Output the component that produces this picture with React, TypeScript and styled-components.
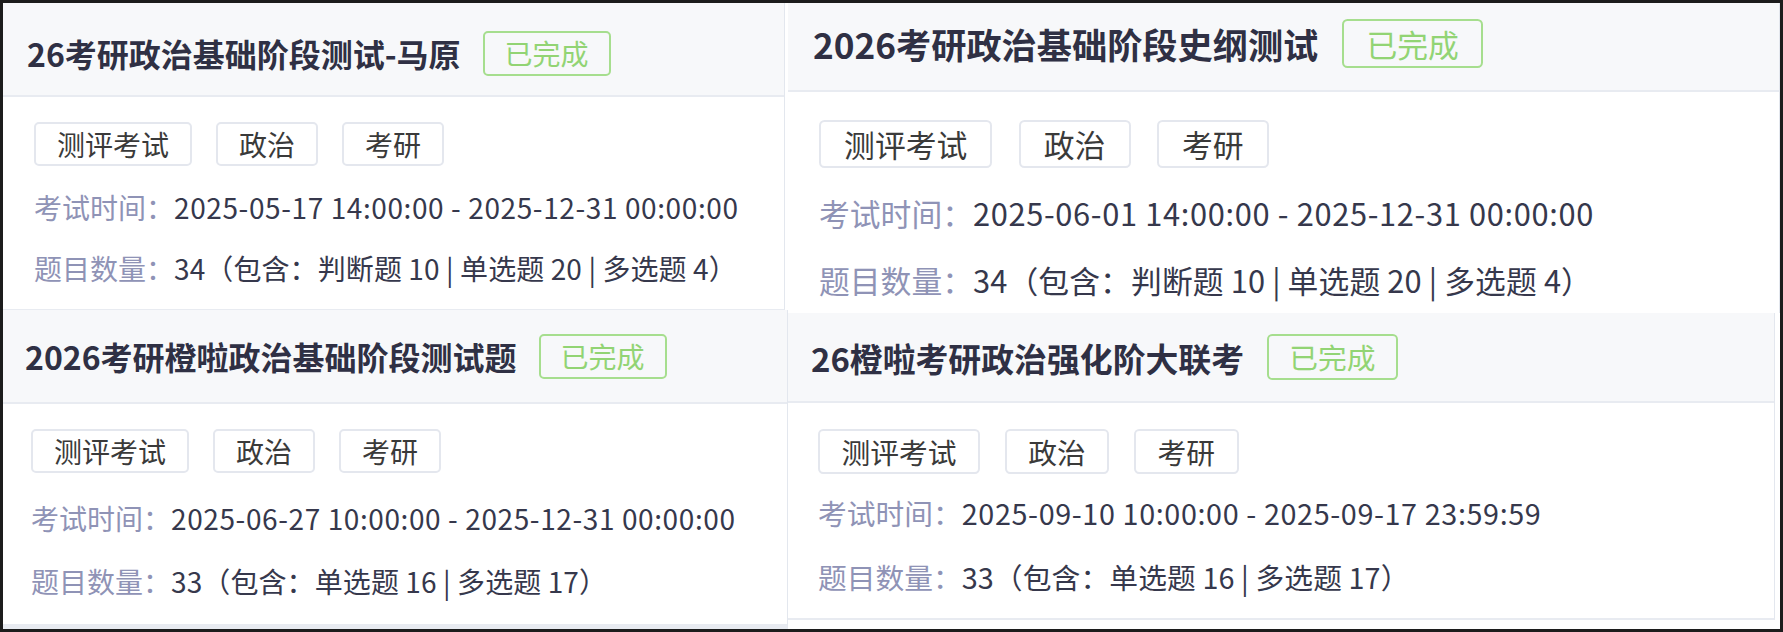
import React from "react";
import styled, { createGlobalStyle } from "styled-components";

const GlobalStyle = createGlobalStyle`
  html, body {
    margin: 0;
    padding: 0;
    background: #ffffff;
  }
  body {
    font-family: "Noto Sans CJK SC", "Noto Sans", sans-serif;
  }
`;

interface ExamCard {
  title: string;
  time: string;
  count: string;
  // the four cards are pasted from separate captures, so each keeps its own scale and offsets
  s: number;
  width?: number;
  height: number;
  headH: number;
  headPadT: number;
  headPadB: number;
  headPadX: number;
  padX: number;
  rowTop: [number, number];
  bottom: number;
}

const left: ExamCard[] = [
  {
    title: "26考研政治基础阶段测试-马原",
    time: "2025-05-17 14:00:00 - 2025-12-31 00:00:00",
    count: "34（包含：判断题 10 | 单选题 20 | 多选题 4）",
    s: 1,
    width: 782,
    height: 307,
    headH: 94,
    headPadT: 8,
    headPadB: 0,
    headPadX: 24,
    padX: 31,
    rowTop: [21, 21],
    bottom: 1,
  },
  {
    title: "2026考研橙啦政治基础阶段测试题",
    time: "2025-06-27 10:00:00 - 2025-12-31 00:00:00",
    count: "33（包含：单选题 16 | 多选题 17）",
    s: 1,
    width: 785,
    height: 319,
    headH: 94,
    headPadT: 0,
    headPadB: 0,
    headPadX: 22,
    padX: 28,
    rowTop: [25, 23],
    bottom: 5,
  },
];

const right: ExamCard[] = [
  {
    title: "2026考研政治基础阶段史纲测试",
    time: "2025-06-01 14:00:00 - 2025-12-31 00:00:00",
    count: "34（包含：判断题 10 | 单选题 20 | 多选题 4）",
    s: 1.1,
    height: 310,
    headH: 89,
    headPadT: 0,
    headPadB: 6,
    headPadX: 25,
    padX: 31,
    rowTop: [21, 21],
    bottom: 0,
  },
  {
    title: "26橙啦考研政治强化阶大联考",
    time: "2025-09-10 10:00:00 - 2025-09-17 23:59:59",
    count: "33（包含：单选题 16 | 多选题 17）",
    s: 1.027,
    width: 987,
    height: 307,
    headH: 90,
    headPadT: 0,
    headPadB: 0,
    headPadX: 23,
    padX: 30,
    rowTop: [18, 22],
    bottom: 2,
  },
];

const tags = ["测评考试", "政治", "考研"];

function Card({ data }: { data: ExamCard }) {
  return (
    <CardBox $w={data.width} $h={data.height} $bottom={data.bottom}>
      <Head $h={data.headH} $padT={data.headPadT} $padB={data.headPadB} $padX={data.headPadX}>
        <Title $s={data.s}>{data.title}</Title>
        <Badge $s={data.s}>已完成</Badge>
      </Head>
      <Body $s={data.s} $padX={data.padX}>
        <TagRow $s={data.s}>
          {tags.map((t) => (
            <Tag key={t} $s={data.s}>{t}</Tag>
          ))}
        </TagRow>
        <Info $s={data.s} $top={data.rowTop[0]}>
          <Label>考试时间：</Label>
          <Value $s={data.s} $spacing={0.6}>{data.time}</Value>
        </Info>
        <Info $s={data.s} $top={data.rowTop[1]}>
          <Label>题目数量：</Label>
          <Value $s={data.s} $spacing={0.1}>{data.count}</Value>
        </Info>
      </Body>
    </CardBox>
  );
}

export default function App() {
  return (
    <>
      <GlobalStyle />
      <Frame>
        <Column $w={785}>
          {left.map((c) => (
            <Card key={c.title} data={c} />
          ))}
        </Column>
        <Column>
          {right.map((c) => (
            <Card key={c.title} data={c} />
          ))}
        </Column>
      </Frame>
    </>
  );
}

const Frame = styled.div`
  width: 1783px;
  height: 632px;
  box-sizing: border-box;
  border: 3px solid #1c1c1c;
  display: flex;
  overflow: hidden;
  background: #ffffff;
`;

const Column = styled.div<{ $w?: number }>`
  display: flex;
  flex-direction: column;
  ${({ $w }) => ($w ? `width: ${$w}px; flex: none;` : "flex: 1; min-width: 0;")}
`;

const CardBox = styled.section<{ $w?: number; $h: number; $bottom: number }>`
  box-sizing: border-box;
  width: ${({ $w }) => ($w ? `${$w}px` : "100%")};
  height: ${({ $h }) => $h}px;
  flex: none;
  background: #ffffff;
  border-right: 1px solid #e3e7ee;
  border-bottom: ${({ $bottom }) => ($bottom ? `${$bottom}px solid #e8ebf1` : "none")};
  overflow: hidden;
`;

const Head = styled.header<{ $h: number; $padT: number; $padB: number; $padX: number }>`
  box-sizing: border-box;
  display: flex;
  align-items: center;
  height: ${({ $h }) => $h}px;
  padding: ${({ $padT, $padB, $padX }) => `${$padT}px ${$padX}px ${$padB}px`};
  background: #f7f8fa;
  border-bottom: 2px solid #e8ebf1;
`;

const Title = styled.h3<{ $s: number }>`
  margin: 0;
  font-size: ${({ $s }) => 32 * $s}px;
  font-weight: 700;
  color: #2f3044;
  white-space: nowrap;
`;

const Badge = styled.span<{ $s: number }>`
  box-sizing: border-box;
  display: inline-flex;
  align-items: center;
  height: ${({ $s }) => 45 * $s}px;
  padding: 0 ${({ $s }) => 20 * $s}px;
  margin-left: ${({ $s }) => 22 * $s}px;
  border: 2px solid #a6de8e;
  border-radius: ${({ $s }) => 5 * $s}px;
  color: #92d474;
  font-size: ${({ $s }) => 28 * $s}px;
  white-space: nowrap;
`;

const Body = styled.div<{ $s: number; $padX: number }>`
  padding: ${({ $s, $padX }) => `${25 * $s}px ${$padX}px 0`};
`;

const TagRow = styled.div<{ $s: number }>`
  display: flex;
  gap: ${({ $s }) => 24 * $s}px;
`;

const Tag = styled.span<{ $s: number }>`
  box-sizing: border-box;
  display: inline-flex;
  align-items: center;
  height: ${({ $s }) => 44 * $s}px;
  padding: 0 ${({ $s }) => 21 * $s}px;
  border: 2px solid #e4e7ee;
  border-radius: ${({ $s }) => 5 * $s}px;
  color: #3a3a3a;
  font-size: ${({ $s }) => 28 * $s}px;
`;

const Info = styled.div<{ $s: number; $top: number }>`
  margin-top: ${({ $s, $top }) => $top * $s}px;
  font-size: ${({ $s }) => 28 * $s}px;
  line-height: ${({ $s }) => 40 * $s}px;
  white-space: nowrap;
`;

const Label = styled.span`
  color: #8f93b6;
`;

const Value = styled.span<{ $s: number; $spacing: number }>`
  color: #36384c;
  letter-spacing: ${({ $s, $spacing }) => $spacing * $s}px;
`;
